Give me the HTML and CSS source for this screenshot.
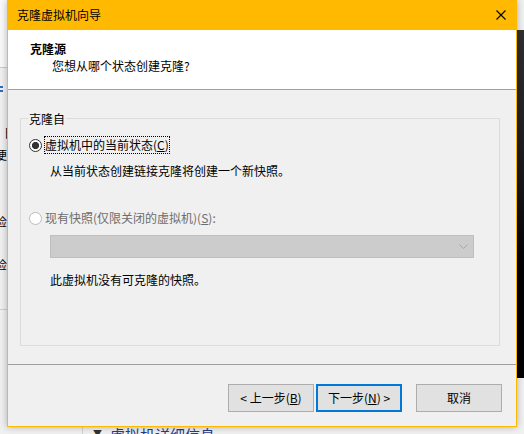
FILE: index.html
```html
<!DOCTYPE html>
<html lang="zh-CN">
<head>
<meta charset="utf-8">
<title>克隆虚拟机向导</title>
<link rel="stylesheet" href="styles.css">
</head>
<body>
<div class="desk">
  <div class="bg-left">
    <div class="bg-left-top"></div>
    <span class="bg-icon"></span>
    <span class="frag frag1">日</span>
    <span class="frag frag2">便</span>
    <span class="frag frag3">检</span>
    <span class="frag frag4">检</span>
    <div class="bg-left-line"></div>
  </div>
  <div class="bg-right"></div>
  <div class="bg-bottom">
    <span class="bg-vline"></span>
    <span class="bg-tri">▼</span>
    <span class="bg-text">虚拟机详细信息</span>
  </div>

  <div class="dialog">
    <div class="titlebar">
      <span class="title">克隆虚拟机向导</span>
      <svg class="close" width="10" height="10" viewBox="0 0 10 10"><path d="M0.5 0.5 L9.5 9.5 M9.5 0.5 L0.5 9.5" stroke="#000" stroke-width="1.1" fill="none"/></svg>
    </div>
    <div class="header">
      <div class="h-title">克隆源</div>
      <div class="h-sub">您想从哪个状态创建克隆?</div>
    </div>
    <div class="body">
      <fieldset class="group">
        <legend class="legend">克隆自</legend>
        <div class="group-inner">
          <div class="radio-row">
            <span class="radio checked"></span>
            <span class="radio-label focus">虚拟机中的当前状态(<u>C</u>)</span>
          </div>
          <div class="desc desc1">从当前状态创建链接克隆将创建一个新快照。</div>
          <div class="radio-row disabled row2">
            <span class="radio"></span>
            <span class="radio-label">现有快照(仅限关闭的虚拟机)(<u>S</u>):</span>
          </div>
          <div class="combo">
            <svg class="chev" width="9" height="5" viewBox="0 0 9 5"><path d="M0.5 0.5 L4.5 4.5 L8.5 0.5" stroke="#a8a8a8" stroke-width="1" fill="none"/></svg>
          </div>
          <div class="desc note">此虚拟机没有可克隆的快照。</div>
        </div>
      </fieldset>
    </div>
    <div class="footer">
      <button class="btn">&lt; 上一步(<u>B</u>)</button>
      <button class="btn default">下一步(<u>N</u>) &gt;</button>
      <button class="btn cancel">取消</button>
    </div>
  </div>
</div>
</body>
</html>
```

FILE: styles.css
```css
* { box-sizing: border-box; }
html, body {
  margin: 0;
  padding: 0;
  width: 524px;
  height: 434px;
  overflow: hidden;
}
body {
  font-family: "Microsoft YaHei", "Noto Sans CJK SC", sans-serif;
  font-size: 12px;
  color: #000;
  background: #f0f0f0;
}
.desk {
  position: relative;
  width: 524px;
  height: 434px;
  background: #f0f0f0;
}

/* windows behind the dialog */
.bg-left {
  position: absolute;
  left: 0;
  top: 0;
  width: 12px;
  height: 434px;
  overflow: hidden;
  background: #f0f0f0;
}
.bg-left-top {
  position: absolute;
  left: 0;
  top: 0;
  width: 12px;
  height: 68px;
  background: #f9f9f9;
  border-bottom: 1px solid #c9c9c9;
}
.bg-icon {
  position: absolute;
  left: 0;
  top: 86px;
  width: 3px;
  height: 6px;
  border-top: 2px solid #2b6cc4;
  border-bottom: 2px solid #2b6cc4;
}
.frag {
  position: absolute;
  font-size: 12px;
  line-height: 14px;
  color: #000;
}
.frag1 { left: 4px; top: 126px; }
.frag2 { left: -5px; top: 148px; }
.frag3 { left: -5px; top: 215px; }
.frag4 { left: -5px; top: 258px; }
.bg-left-line {
  position: absolute;
  left: 0;
  top: 309px;
  width: 12px;
  border-top: 1px solid #cfcfcf;
}
.bg-right {
  position: absolute;
  left: 512px;
  top: 30px;
  width: 12px;
  height: 348px;
  background: linear-gradient(#303030, #1a1a1a 40%, #000 70%);
}
.bg-bottom {
  position: absolute;
  left: 0;
  top: 420px;
  width: 524px;
  height: 14px;
  overflow: hidden;
}
.bg-vline {
  position: absolute;
  left: 82px;
  top: 0;
  height: 14px;
  border-left: 1px solid #d2d2d2;
}
.bg-tri {
  position: absolute;
  left: 93px;
  top: 9px;
  font-size: 9px;
  line-height: 10px;
  color: #333;
}
.bg-text {
  position: absolute;
  left: 110px;
  top: 6px;
  font-size: 15px;
  line-height: 18px;
  color: #2a3b8f;
}

/* dialog */
.dialog {
  position: absolute;
  left: 7px;
  top: 0;
  width: 510px;
  height: 427px;
  border: 1px solid #ffb900;
  border-top: 0;
  background: #f0f0f0;
  display: flex;
  flex-direction: column;
  box-shadow: 0 0 7px rgba(0, 0, 0, 0.28);
}
.titlebar {
  height: 30px;
  flex: none;
  background: #ffb900;
  display: flex;
  align-items: center;
  justify-content: space-between;
  padding: 0 10px 0 9px;
}
.title {
  line-height: 16px;
}
.close {
  display: block;
}
.header {
  height: 60px;
  flex: none;
  background: #fff;
  border-bottom: 1px solid #a0a0a0;
  padding: 11px 0 0 22px;
}
.h-title {
  font-weight: bold;
  line-height: 16px;
}
.h-sub {
  line-height: 16px;
  margin-top: 1px;
  padding-left: 22px;
}
.body {
  height: 274px;
  flex: none;
  padding: 20px 16px 0 12px;
}
.group {
  margin: 0;
  padding: 0;
  border: 1px solid #dcdcdc;
  min-width: 0;
}
.legend {
  margin-left: 7px;
  padding: 0 1px;
  line-height: 17px;
}
.group-inner {
  height: 218px;
  padding-top: 9px;
}
.radio-row {
  display: flex;
  align-items: center;
  height: 18px;
  padding-left: 8px;
}
.radio {
  width: 13px;
  height: 13px;
  border-radius: 50%;
  border: 1px solid #333;
  background: #fff;
  flex: none;
}
.radio.checked {
  background: radial-gradient(circle, #333 0 3.3px, #fff 3.9px);
}
.radio-label {
  margin-left: 2px;
  line-height: 16px;
  border: 1px dotted transparent;
}
.radio-label.focus {
  border-color: #000;
}
.disabled .radio {
  border-color: #bcbcbc;
}
.disabled .radio-label {
  color: #6d6d6d;
}
.desc {
  margin-left: 29px;
  line-height: 16px;
}
.desc1 { margin-top: 9px; }
.row2 { margin-top: 30px; }
.combo {
  margin: 8px 0 0 29px;
  width: 424px;
  height: 23px;
  background: #cccccc;
  border: 1px solid #bfbfbf;
  display: flex;
  align-items: center;
  justify-content: flex-end;
  padding-right: 5px;
}
.chev { display: block; }
.note { margin-top: 14px; }

.footer {
  height: 62px;
  flex: none;
  border-top: 1px solid #a0a0a0;
  display: flex;
  justify-content: flex-end;
  align-items: flex-start;
  padding: 19px 14px 0 0;
}
.btn {
  width: 86px;
  height: 28px;
  border: 1px solid #adadad;
  background: #e1e1e1;
  font-family: inherit;
  font-size: 12px;
  color: #000;
  padding: 0;
  line-height: 16px;
}
.btn.default {
  border: 2px solid #0078d7;
  margin-left: 2px;
}
.btn.cancel {
  margin-left: 14px;
}
```
